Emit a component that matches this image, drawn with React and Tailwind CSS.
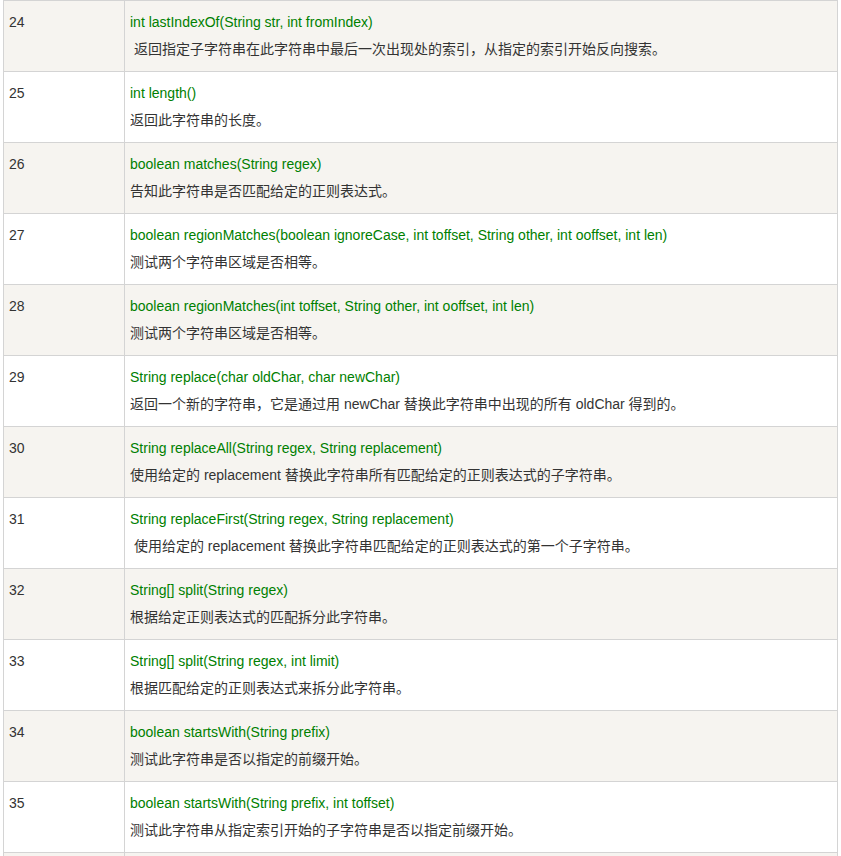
import React from 'react';

const rows = [
  ['24', 'int lastIndexOf(String str, int fromIndex)', '\u00a0返回指定子字符串在此字符串中最后一次出现处的索引，从指定的索引开始反向搜索。'],
  ['25', 'int length()', '返回此字符串的长度。'],
  ['26', 'boolean matches(String regex)', '告知此字符串是否匹配给定的正则表达式。'],
  ['27', 'boolean regionMatches(boolean ignoreCase, int toffset, String other, int ooffset, int len)', '测试两个字符串区域是否相等。'],
  ['28', 'boolean regionMatches(int toffset, String other, int ooffset, int len)', '测试两个字符串区域是否相等。'],
  ['29', 'String replace(char oldChar, char newChar)', '返回一个新的字符串，它是通过用 newChar 替换此字符串中出现的所有 oldChar 得到的。'],
  ['30', 'String replaceAll(String regex, String replacement)', '使用给定的 replacement 替换此字符串所有匹配给定的正则表达式的子字符串。'],
  ['31', 'String replaceFirst(String regex, String replacement)', '\u00a0使用给定的 replacement 替换此字符串匹配给定的正则表达式的第一个子字符串。'],
  ['32', 'String[] split(String regex)', '根据给定正则表达式的匹配拆分此字符串。'],
  ['33', 'String[] split(String regex, int limit)', '根据匹配给定的正则表达式来拆分此字符串。'],
  ['34', 'boolean startsWith(String prefix)', '测试此字符串是否以指定的前缀开始。'],
  ['35', 'boolean startsWith(String prefix, int toffset)', '测试此字符串从指定索引开始的子字符串是否以指定前缀开始。'],
];

export default function App() {
  return (
    <div className="h-[856px] overflow-hidden bg-white">
      <table
        className="ml-[3px] w-[835px] border-collapse text-[14px] leading-[27px] text-[#333]"
        style={{ fontFamily: '"Liberation Sans", Arial, "Noto Sans CJK SC", sans-serif' }}
      >
        <tbody>
          {rows.map(([num, sig, desc], i) => (
            <tr key={num} className={i % 2 === 0 ? 'bg-[#f6f4f0]' : 'bg-white'}>
              <td className="w-[121px] border border-[#d4d4d4] px-[5px] pt-[8px] pb-[8px] align-top">{num}</td>
              <td className="border border-[#d4d4d4] px-[5px] pt-[8px] pb-[8px] align-top">
                <div className="text-[#008000]">{sig}</div>
                <div>{desc}</div>
              </td>
            </tr>
          ))}
          {/* next row, only its top edge shows */}
          <tr className="bg-[#f6f4f0]">
            <td className="h-[71px] border border-[#d4d4d4]"></td>
            <td className="h-[71px] border border-[#d4d4d4]"></td>
          </tr>
        </tbody>
      </table>
    </div>
  );
}
